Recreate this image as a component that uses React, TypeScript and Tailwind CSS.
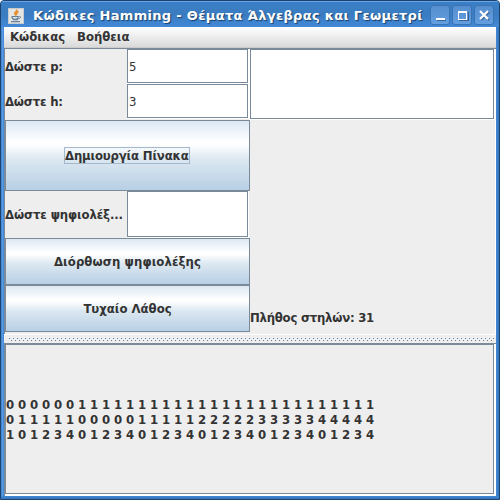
import React from "react";

const ui = "font-['DejaVu_Sans_Condensed','DejaVu_Sans',sans-serif] [font-stretch:condensed]";
const matrix = [
  "0000001111111111111111111111111",
  "0111110000011111222223333344444",
  "1012340123401234012340123401234",
];

function Label({ children, className = "" }: { children: React.ReactNode; className?: string }) {
  return <span className={`block whitespace-nowrap font-bold text-[13px] leading-[15px] ${className}`}>{children}</span>;
}

function Field({ value = "", className = "" }: { value?: string; className?: string }) {
  return (
    <div className={`w-[122px] bg-white pr-px pb-px ${className}`}>
      <div className="flex h-full items-center border border-[#7a8a99] bg-white pl-[1px] text-[13px] leading-[15px]">{value}</div>
    </div>
  );
}

function MetalButton({ children, className = "" }: { children: React.ReactNode; className?: string }) {
  return (
    <button className={`flex w-[245px] shrink-0 items-center justify-center border border-[#7a8a99] bg-[linear-gradient(to_bottom,#dde8f3_0%,#ffffff_30%,#ffffff_34%,#dce8f1_55%,#b8cfe5_100%)] ${className}`}>
      {children}
    </button>
  );
}

function WindowButton({ children }: { children: React.ReactNode }) {
  return (
    <button className="h-[20px] w-[20px] shrink-0 rounded-[3px] border border-[#3873b4] bg-linear-to-b from-[#568fcf] to-[#639ee0]">
      <svg className="block" width="18" height="18" viewBox="0 0 18 18" fill="none" shapeRendering="crispEdges">{children}</svg>
    </button>
  );
}

export default function App() {
  return (
    <div className="h-[500px] w-[500px] bg-white">
      <div className={`flex h-full flex-col overflow-hidden rounded-t-[4px] border border-[#1c426d] bg-[#3d84d0] text-[#333333] ${ui}`}>
        <header className="flex h-[26px] shrink-0 items-center border-t border-[#68a5e8] bg-linear-to-b from-[#3a7fc7] via-[#3b7cc0] to-[#4289d8] pl-[7px] pr-[5px]">
          <svg className="mt-[2px] shrink-0" width="16" height="16" viewBox="0 0 16 16" fill="none">
            <rect x=".5" y=".5" width="15" height="15" fill="#e5e5e2" stroke="#c5cbd0" />
            <path d="M8.8 1.5c1 2-3.3 2.7-1.8 4.5l1 1.5M10.5 3.5C8 5 8 5.5 9 7" stroke="#e58a24" strokeWidth="1.5" />
            <path d="M3.5 8.5h7M4 9c.2 1.8 1 2.3 3 2.3S10 11 10.3 9M5 11.7h5M3 13.6h9" stroke="#66809b" strokeWidth="1.2" />
            <path d="M10.5 8.5c3-.7 2.7 2-.3 2.3" stroke="#66809b" />
          </svg>
          <h1 className="ml-[9px] mt-[2px] w-[396px] whitespace-nowrap font-['DejaVu_Sans',sans-serif] text-[13px] font-bold leading-[18px] tracking-[0.31px] text-white [font-stretch:normal] [text-shadow:1px_1px_1px_#173f6d]">Κώδικες Hamming - Θέματα Άλγεβρας και Γεωμετρί</h1>
          <div className="ml-[2px] mt-[1px] flex shrink-0 gap-[2px]">
            <WindowButton><path d="M6 14.5h9" stroke="#386493" /><path d="M5 13h9" stroke="white" strokeWidth="2" /></WindowButton>
            <WindowButton><path d="M6 14.5h9V6" stroke="#386493" /><path d="M5.5 6h8v7.5h-8z" stroke="white" /><path d="M5 5.5h9" stroke="white" /></WindowButton>
            <WindowButton><g shapeRendering="auto"><path d="m6 6 8 8m0-8-8 8" stroke="#386493" strokeWidth="2" /><path d="m5 5 8 8m0-8-8 8" stroke="white" strokeWidth="2.2" /></g></WindowButton>
          </div>
        </header>

        <div className="flex min-h-0 flex-1">
          <div className="w-[3px] shrink-0 bg-linear-to-r from-[#397fc8] via-[#579ae5] to-[#3d84d0]" />
          <main className="flex w-[492px] shrink-0 flex-col bg-[#eeeeee]">
            <nav className="flex h-[21px] shrink-0 items-center gap-[12px] border-b border-[#cccccc] bg-linear-to-b from-white to-[#dadada] pb-px pl-[6px]">
              <Label className="w-[55px]">Κώδικας</Label>
              <Label>Βοήθεια</Label>
            </nav>
            <section className="flex h-[286px] shrink-0 border-l border-t border-[#7a8a99]">
              <div className="flex w-[245px] shrink-0 flex-col">
                <div className="flex h-[35px] shrink-0"><div className="flex w-[122px] items-center"><Label className="tracking-[-0.2px]">Δώστε p:</Label></div><Field value="5" /><i className="w-px bg-white" /></div>
                <div className="mb-px flex h-[35px] shrink-0"><div className="flex w-[122px] items-center"><Label className="tracking-[-0.2px]">Δώστε h:</Label></div><Field value="3" /><i className="w-px bg-white" /></div>
                <MetalButton className="h-[71px]"><span className="mr-px w-[126px] border border-[#a3b8cc]"><Label className="text-left tracking-[-0.15px]">Δημιουργία Πίνακα</Label></span></MetalButton>
                <div className="flex h-[47px] shrink-0"><div className="flex w-[122px] items-center"><Label className="tracking-[-0.12px]">Δώστε ψηφιολέξ...</Label></div><Field /></div>
                <MetalButton className="h-[47px]"><Label className="tracking-[0.1px]">Διόρθωση ψηφιολέξης</Label></MetalButton>
                <MetalButton className="h-[47px]"><Label>Τυχαίο Λάθος</Label></MetalButton>
              </div>
              <div className="flex w-[246px] flex-col justify-between border-r border-white">
                <div className="h-[71px] bg-white pb-px pr-px"><div className="h-full border border-[#7a8a99]" /></div>
                <Label className="mb-[9px] tracking-[-0.24px]">Πλήθος στηλών: 31</Label>
              </div>
            </section>
            <div className="h-[9px] shrink-0 border-t border-white pl-[4px] pr-[2px] pt-[2px]">
              <svg className="block" width="486" height="5" shapeRendering="crispEdges">
                <defs><pattern id="bumps" width="4" height="4" patternUnits="userSpaceOnUse"><path d="M0 0h1v1H0zM2 2h1v1H2z" fill="white" /><path d="M1 1h1v1H1zM3 3h1v1H3z" fill="#6382a0" /></pattern></defs>
                <rect width="486" height="4" fill="url(#bumps)" />
              </svg>
            </div>
            <section className="h-[153px] shrink-0 border-l border-t border-[#7a8a99] bg-white pb-[2px] pr-[2px]">
              <div className="flex h-full flex-col justify-center border border-[#7a8a99] bg-[#eeeeee]">
                {matrix.map((row, r) => <div key={r} className="flex h-[15px]">{row.split("").map((n, i) => <Label key={i} className="w-[12px] shrink-0">{n}</Label>)}</div>)}
              </div>
            </section>
          </main>
          <div className="w-[3px] shrink-0 bg-linear-to-r from-[#4289d8] to-[#3474b8]" />
        </div>
        <div className="h-[3px] shrink-0 bg-linear-to-b from-[#4289d8] to-[#3474b8]" />
      </div>
    </div>
  );
}
